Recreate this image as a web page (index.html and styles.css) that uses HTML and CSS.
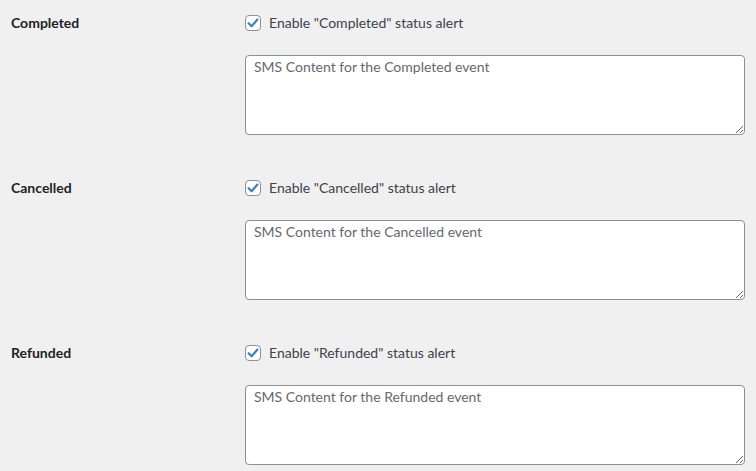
FILE: index.html
```html
<!DOCTYPE html>
<html>
<head>
<meta charset="utf-8">
<link rel="stylesheet" href="styles.css">
</head>
<body>
<div class="form">
  <div class="row">
    <div class="label">Completed</div>
    <div class="field">
      <label class="check"><span class="box"><svg viewBox="0 0 16 16" width="16" height="16"><path d="M3.6 8.2 L6.6 11.2 L12.4 4.6" fill="none" stroke="#3582c4" stroke-width="2.2" stroke-linecap="round" stroke-linejoin="round"/></svg></span><span class="text">Enable "Completed" status alert</span></label>
      <textarea class="sms">SMS Content for the Completed event</textarea>
    </div>
  </div>
  <div class="row">
    <div class="label">Cancelled</div>
    <div class="field">
      <label class="check"><span class="box"><svg viewBox="0 0 16 16" width="16" height="16"><path d="M3.6 8.2 L6.6 11.2 L12.4 4.6" fill="none" stroke="#3582c4" stroke-width="2.2" stroke-linecap="round" stroke-linejoin="round"/></svg></span><span class="text">Enable "Cancelled" status alert</span></label>
      <textarea class="sms">SMS Content for the Cancelled event</textarea>
    </div>
  </div>
  <div class="row">
    <div class="label">Refunded</div>
    <div class="field">
      <label class="check"><span class="box"><svg viewBox="0 0 16 16" width="16" height="16"><path d="M3.6 8.2 L6.6 11.2 L12.4 4.6" fill="none" stroke="#3582c4" stroke-width="2.2" stroke-linecap="round" stroke-linejoin="round"/></svg></span><span class="text">Enable "Refunded" status alert</span></label>
      <textarea class="sms">SMS Content for the Refunded event</textarea>
    </div>
  </div>
</div>
</body>
</html>
```
FILE: styles.css
```css
html, body {
  margin: 0;
  padding: 0;
  background: #f0f0f1;
}
body {
  font-family: Lato, "Open Sans", sans-serif;
  font-size: 14px;
  color: #3c434a;
}
.row {
  display: grid;
  grid-template-columns: 245px 500px;
  padding: 13px 0 30px;
}
.label {
  padding-left: 11px;
  line-height: 20px;
  font-weight: 700;
  color: #1d2327;
}
.field {
  display: flex;
  flex-direction: column;
  gap: 22px;
}
.check {
  display: flex;
  align-items: center;
  gap: 8px;
  height: 20px;
  line-height: 20px;
}
.box {
  box-sizing: border-box;
  width: 16px;
  height: 16px;
  border: 1px solid #8c8f94;
  border-radius: 4px;
  background: #fff;
  display: flex;
  align-items: center;
  justify-content: center;
}
.box svg {
  display: block;
  flex: none;
}
.sms {
  box-sizing: border-box;
  display: block;
  width: 500px;
  height: 80px;
  margin: 0;
  padding: 0 8px;
  border: 1px solid #8c8f94;
  border-radius: 4px;
  background: #fff;
  font-family: Lato, "Open Sans", sans-serif;
  font-size: 14px;
  line-height: 1.5;
  color: #646970;
  resize: both;
}
```
